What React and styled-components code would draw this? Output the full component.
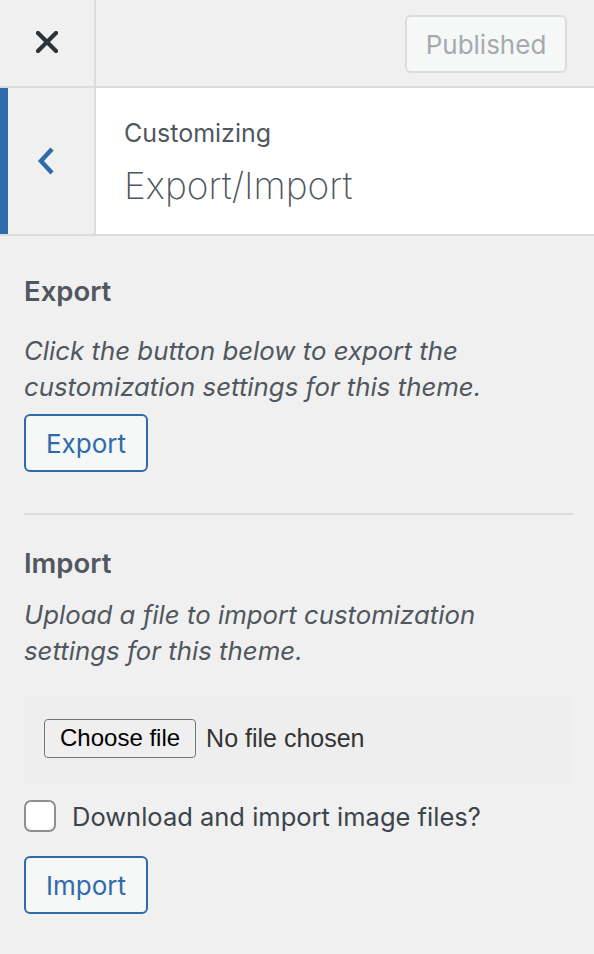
import React from "react";
import styled, { createGlobalStyle } from "styled-components";

const Global = createGlobalStyle`
  html, body { margin: 0; padding: 0; background: #f0f0f1; }
  body { font-family: Inter, "Noto Sans", sans-serif; color: #50575e; }
  * { box-sizing: border-box; }
`;

const Panel = styled.div`
  width: 594px;
  min-height: 954px;
  background: #f0f0f1;
  display: flex;
  flex-direction: column;
`;

const TopBar = styled.div`
  height: 88px;
  display: flex;
  border-bottom: 2px solid #dcdcde;
`;

const CloseBox = styled.button`
  width: 96px;
  border: none;
  border-right: 2px solid #dcdcde;
  background: transparent;
  display: flex;
  align-items: center;
  justify-content: center;
  padding: 0 0 2px 0;
  color: #2c3338;
`;

const TopRight = styled.div`
  flex: 1;
  display: flex;
  justify-content: flex-end;
  align-items: flex-start;
  padding: 15px 27px 0 0;
`;

const PublishedBtn = styled.button`
  width: 162px;
  height: 58px;
  border: 2px solid #dcdcde;
  border-radius: 6px;
  background: #f6f7f7;
  color: #a7aaad;
  font-family: Inter, sans-serif;
  font-size: 26px;
  padding: 0;
`;

const SectionHead = styled.div`
  height: 148px;
  display: flex;
  border-bottom: 2px solid #dcdcde;
  background: #fff;
`;

const BackBox = styled.button`
  width: 96px;
  border: none;
  border-left: 8px solid #2f6bab;
  border-right: 2px solid #dcdcde;
  background: #f0f0f1;
  display: flex;
  align-items: center;
  justify-content: flex-start;
  padding: 0 0 0 29px;
`;

const TitleWrap = styled.div`
  flex: 1;
  display: flex;
  flex-direction: column;
  padding: 31px 0 0 28px;
`;

const Crumb = styled.span`
  font-size: 25px;
  line-height: 28px;
  color: #50575e;
`;

const Title = styled.h2`
  margin: 17px 0 0;
  font-size: 37px;
  font-weight: 200;
  line-height: 44px;
  color: #50575e;
`;

const Body = styled.div`
  padding: 43px 21px 0 24px;
  display: flex;
  flex-direction: column;
`;

const Heading = styled.h3`
  margin: 0;
  font-size: 27.5px;
  font-weight: 600;
  line-height: 24px;
  color: #50575e;
`;

const Desc = styled.p`
  margin: ${(p) => p.$top}px 0 0;
  font-size: 25.8px;
  font-style: italic;
  line-height: 36px;
  color: #50575e;
`;

const OutlineBtn = styled.button`
  align-self: flex-start;
  margin-top: ${(p) => p.$top}px;
  width: 124px;
  height: 58px;
  border: 2px solid #2f6bab;
  border-radius: 6px;
  background: #f6f7f7;
  color: #2f6bab;
  font-family: Inter, sans-serif;
  font-size: 26px;
  padding: 0;
`;

const Divider = styled.hr`
  border: none;
  border-top: 2px solid #dcdcde;
  margin: 41px 0 36px;
  width: 100%;
`;

const FileArea = styled.div`
  margin-top: 28px;
  height: 86px;
  background: #eeeeef;
  display: flex;
  align-items: center;
  padding: 0 0 4px 20px;
  gap: 10px;
`;

const FileBtn = styled.span`
  height: 39px;
  padding: 0 15px;
  display: flex;
  align-items: center;
  border: 1.5px solid #767676;
  border-radius: 4px;
  background: #efefef;
  color: #000;
  font-family: "Liberation Sans", Arial, sans-serif;
  font-size: 24px;
`;

const FileStatus = styled.span`
  color: #333;
  font-family: "Liberation Sans", Arial, sans-serif;
  font-size: 25px;
`;

const CheckRow = styled.label`
  margin-top: 17px;
  display: flex;
  align-items: center;
  gap: 16px;
  font-size: 25.5px;
  color: #3c434a;
`;

const Box = styled.span`
  width: 32px;
  height: 32px;
  border: 2px solid #8c8f94;
  border-radius: 7px;
  background: #fff;
  flex: none;
`;

export default function App() {
  return (
    <>
      <Global />
      <Panel>
        <TopBar>
          <CloseBox aria-label="Close">
            <svg width="22" height="22" viewBox="0 0 22 22">
              <path d="M2 2 L20 20 M20 2 L2 20" stroke="#2c3338" strokeWidth="4.2" strokeLinecap="square" fill="none" />
            </svg>
          </CloseBox>
          <TopRight>
            <PublishedBtn disabled>Published</PublishedBtn>
          </TopRight>
        </TopBar>
        <SectionHead>
          <BackBox aria-label="Back">
            <svg width="18" height="30" viewBox="0 0 18 30">
              <path d="M15 3 L4 15 L15 27" stroke="#2f6bab" strokeWidth="4.5" fill="none" />
            </svg>
          </BackBox>
          <TitleWrap>
            <Crumb>Customizing</Crumb>
            <Title>Export/Import</Title>
          </TitleWrap>
        </SectionHead>
        <Body>
          <Heading>Export</Heading>
          <Desc $top={30}>
            Click the button below to export the customization settings for this theme.
          </Desc>
          <OutlineBtn $top={9}>Export</OutlineBtn>
          <Divider />
          <Heading>Import</Heading>
          <Desc $top={22}>
            Upload a file to import customization settings for this theme.
          </Desc>
          <FileArea>
            <FileBtn>Choose file</FileBtn>
            <FileStatus>No file chosen</FileStatus>
          </FileArea>
          <CheckRow>
            <Box />
            Download and import image files?
          </CheckRow>
          <OutlineBtn $top={24}>Import</OutlineBtn>
        </Body>
      </Panel>
    </>
  );
}
